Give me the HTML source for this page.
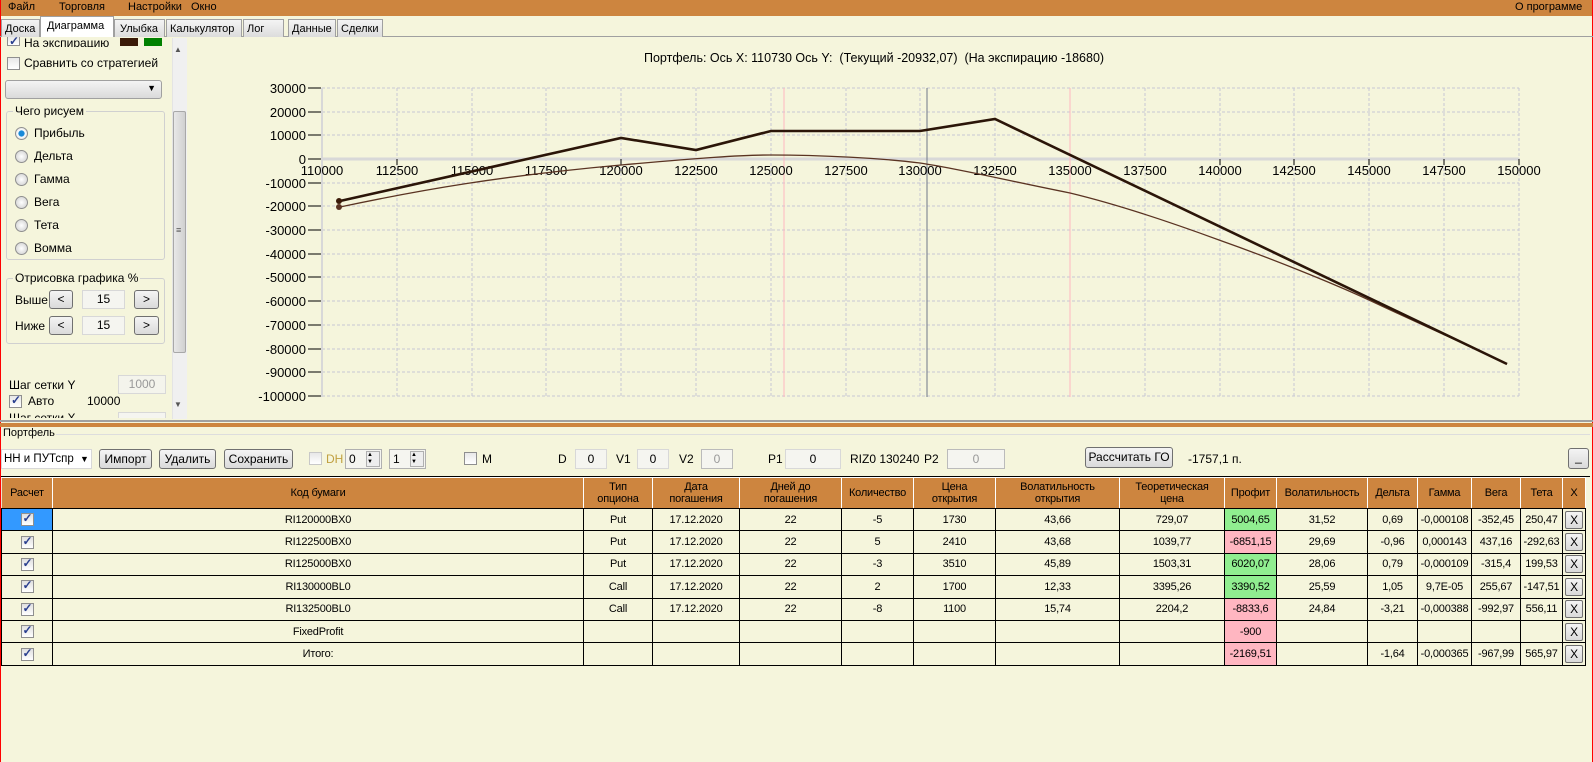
<!DOCTYPE html>
<html><head><meta charset="utf-8"><style>
*{box-sizing:border-box;margin:0;padding:0}
body{width:1593px;height:762px;position:relative;overflow:hidden;background:#f5f5dc;font-family:"Liberation Sans",sans-serif;font-size:12px;color:#000}
.a{position:absolute;white-space:nowrap}
.menu{left:0;top:0;width:1593px;height:16px;background:#cd853f}
.tab{position:absolute;top:19px;height:18px;background:linear-gradient(#f4f4f4,#dcdcdc);border:1px solid #a0a0a0;border-bottom:none;font-size:11px;padding:3px 3px;overflow:hidden;white-space:nowrap}
.btn{position:absolute;background:linear-gradient(#f4f4f4,#dadada);border:1px solid #707070;border-radius:3px;font-size:12px;text-align:center}
.inp{position:absolute;background:#f5f5f0;border:1px solid #d8d8d8;text-align:center;font-size:12px}
.cb{position:absolute;width:13px;height:13px;border:1px solid #8f8f8f;background:linear-gradient(#e8e8e8,#fff)}
.cb.on::after{content:"✓";position:absolute;left:1px;top:-3px;font-size:12px;color:#2a3f8f;font-weight:bold}
.rd{position:absolute;width:13px;height:13px;border-radius:50%;border:1px solid #8f8f8f;background:radial-gradient(#fff,#ccc)}
.rd.on{background:radial-gradient(#1a8ad8 35%,#fff 45%,#ccc)}
.grp{position:absolute;border:1px solid #d0d0d0;border-radius:3px}
.grp span{position:absolute;top:-8px;left:6px;background:#f5f5dc;padding:0 2px}
table{position:absolute;left:1px;top:477px;border-collapse:collapse;table-layout:fixed;font-size:11px;letter-spacing:-0.2px}
td,th{border:1px solid #000;text-align:center;overflow:hidden;white-space:nowrap;height:22.4px;padding:0}
th{background:#cd853f;font-weight:normal;height:31px;line-height:12px;border-color:#fff #fff #000 #fff;border-left:1px solid #f0e0d0}
.g{background:#90ee90}.p{background:#ffb6c1}
.x{display:inline-block;width:18px;height:18px;border:1px solid #707070;border-radius:2px;background:linear-gradient(#f4f4f4,#dadada);line-height:16px;font-size:12px}
.tc{display:inline-block;width:13px;height:13px;border:1px solid #8f8f8f;background:linear-gradient(#e0e0e0,#fff);position:relative;vertical-align:middle}
.tc::after{content:"✓";position:absolute;left:1px;top:-3px;font-size:12px;color:#2a3f8f;font-weight:bold}
</style></head><body>
<div class="a menu"></div>
<div class="a" style="left:0;top:0;width:1px;height:762px;background:#f00"></div>
<div class="a" style="left:1592px;top:0;width:1px;height:762px;background:#f00"></div>
<div class="a" style="left:8px;top:1px;font-size:11px">Файл</div>
<div class="a" style="left:59px;top:1px;font-size:11px">Торговля</div>
<div class="a" style="left:128px;top:1px;font-size:11px">Настройки</div>
<div class="a" style="left:191px;top:1px;font-size:11px">Окно</div>
<div class="a" style="left:1515px;top:1px;font-size:11px">О программе</div>
<div class="a" style="left:0;top:36px;width:1593px;height:1px;background:#a0a0a0"></div>
<div class="tab" style="left:1px;width:39px">Доска</div>
<div class="tab" style="left:40px;top:16px;height:21px;width:74px;background:#fff;padding-top:3px;padding-left:6px">Диаграмма</div>
<div class="tab" style="left:114px;width:51px;padding-left:5px">Улыбка</div>
<div class="tab" style="left:166px;width:76px">Калькулятор</div>
<div class="tab" style="left:243px;width:41px">Лог</div>
<div class="tab" style="left:288px;width:48px">Данные</div>
<div class="tab" style="left:337px;width:46px">Сделки</div>

<!-- left panel -->
<div class="cb on" style="left:7px;top:37px;height:9px;border-top:none"></div>
<div class="a" style="left:24px;top:36px;font-size:12px;height:11px;overflow:hidden">На экспирацию</div>
<div class="a" style="left:120px;top:38px;width:18px;height:8px;background:#3a1a08"></div>
<div class="a" style="left:144px;top:38px;width:18px;height:8px;background:#008000"></div>
<div class="cb" style="left:7px;top:57px"></div>
<div class="a" style="left:24px;top:56px">Сравнить со стратегией</div>
<div class="btn" style="left:5px;top:80px;width:157px;height:19px;border-color:#a0a0a0"><span style="position:absolute;right:5px;top:2px;font-size:9px">▼</span></div>
<div class="grp" style="left:6px;top:111px;width:159px;height:149px"><span>Чего рисуем</span></div>
<div class="rd on" style="left:15px;top:127px"></div><div class="a" style="left:34px;top:126px">Прибыль</div>
<div class="rd" style="left:15px;top:150px"></div><div class="a" style="left:34px;top:149px">Дельта</div>
<div class="rd" style="left:15px;top:173px"></div><div class="a" style="left:34px;top:172px">Гамма</div>
<div class="rd" style="left:15px;top:196px"></div><div class="a" style="left:34px;top:195px">Вега</div>
<div class="rd" style="left:15px;top:219px"></div><div class="a" style="left:34px;top:218px">Тета</div>
<div class="rd" style="left:15px;top:242px"></div><div class="a" style="left:34px;top:241px">Вомма</div>
<div class="grp" style="left:6px;top:278px;width:159px;height:66px"><span>Отрисовка графика %</span></div>
<div class="a" style="left:15px;top:293px">Выше</div>
<div class="btn" style="left:49px;top:290px;width:24px;height:19px;line-height:17px">&lt;</div>
<div class="inp" style="left:82px;top:290px;width:43px;height:19px;line-height:17px">15</div>
<div class="btn" style="left:134px;top:290px;width:25px;height:19px;line-height:17px">&gt;</div>
<div class="a" style="left:15px;top:319px">Ниже</div>
<div class="btn" style="left:49px;top:316px;width:24px;height:19px;line-height:17px">&lt;</div>
<div class="inp" style="left:82px;top:316px;width:43px;height:19px;line-height:17px">15</div>
<div class="btn" style="left:134px;top:316px;width:25px;height:19px;line-height:17px">&gt;</div>
<div class="a" style="left:9px;top:378px">Шаг сетки Y</div>
<div class="inp" style="left:118px;top:375px;width:48px;height:19px;line-height:17px;color:#999;background:#f4f4ec">1000</div>
<div class="cb on" style="left:9px;top:395px"></div>
<div class="a" style="left:28px;top:394px">Авто</div>
<div class="a" style="left:87px;top:394px">10000</div>
<div class="a" style="left:9px;top:411px;height:7px;overflow:hidden">Шаг сетки X</div>
<div class="inp" style="left:118px;top:412px;width:48px;height:6px;border-bottom:none"></div>
<div class="a" style="left:172px;top:38px;width:15px;height:381px;background:#f0f0f0;border-left:1px solid #e4e4e4"></div>
<div class="a" style="left:174px;top:45px;font-size:8px;color:#555">▲</div>
<div class="a" style="left:174px;top:400px;font-size:8px;color:#555">▼</div>
<div class="a" style="left:173px;top:111px;width:13px;height:242px;background:linear-gradient(90deg,#e8e8e8,#d0d0d0);border:1px solid #a8a8a8;border-radius:2px"></div>
<div class="a" style="left:176px;top:225px;font-size:9px;color:#555">≡</div>

<!-- chart -->
<div class="a" style="left:644px;top:51px;font-size:12.5px">Портфель: Ось X: 110730 Ось Y:&nbsp; (Текущий -20932,07)&nbsp; (На экспирацию -18680)</div>
<svg class="a" style="left:0;top:0" width="1593" height="420" xmlns="http://www.w3.org/2000/svg" font-family="Liberation Sans, sans-serif" font-size="12">
<g stroke="#c8c8d4" stroke-dasharray="3,2" stroke-width="1">
<line x1="397" y1="88" x2="397" y2="397"/><line x1="472" y1="88" x2="472" y2="397"/><line x1="546" y1="88" x2="546" y2="397"/><line x1="621" y1="88" x2="621" y2="397"/><line x1="696" y1="88" x2="696" y2="397"/><line x1="771" y1="88" x2="771" y2="397"/><line x1="846" y1="88" x2="846" y2="397"/><line x1="920" y1="88" x2="920" y2="397"/><line x1="995" y1="88" x2="995" y2="397"/><line x1="1070" y1="88" x2="1070" y2="397"/><line x1="1145" y1="88" x2="1145" y2="397"/><line x1="1220" y1="88" x2="1220" y2="397"/><line x1="1294" y1="88" x2="1294" y2="397"/><line x1="1369" y1="88" x2="1369" y2="397"/><line x1="1444" y1="88" x2="1444" y2="397"/><line x1="1519" y1="88" x2="1519" y2="397"/>
<line x1="322" y1="88" x2="1519" y2="88"/><line x1="322" y1="112" x2="1519" y2="112"/><line x1="322" y1="135" x2="1519" y2="135"/><line x1="322" y1="183" x2="1519" y2="183"/><line x1="322" y1="206" x2="1519" y2="206"/><line x1="322" y1="230" x2="1519" y2="230"/><line x1="322" y1="254" x2="1519" y2="254"/><line x1="322" y1="277" x2="1519" y2="277"/><line x1="322" y1="301" x2="1519" y2="301"/><line x1="322" y1="325" x2="1519" y2="325"/><line x1="322" y1="349" x2="1519" y2="349"/><line x1="322" y1="372" x2="1519" y2="372"/><line x1="322" y1="396" x2="1519" y2="396"/>
</g>
<line x1="322" y1="159" x2="1519" y2="159" stroke="#d8d8d8" stroke-width="3"/>
<line x1="322" y1="88" x2="322" y2="397" stroke="#d8d8d8" stroke-width="2"/>
<line x1="784" y1="88" x2="784" y2="397" stroke="#ffb6c1"/>
<line x1="1070" y1="88" x2="1070" y2="397" stroke="#ffb6c1"/>
<line x1="927" y1="88" x2="927" y2="397" stroke="#707888"/>
<g stroke="#000"><line x1="308" y1="88" x2="321" y2="88"/><line x1="308" y1="112" x2="321" y2="112"/><line x1="308" y1="135" x2="321" y2="135"/><line x1="308" y1="159" x2="321" y2="159"/><line x1="308" y1="183" x2="321" y2="183"/><line x1="308" y1="206" x2="321" y2="206"/><line x1="308" y1="230" x2="321" y2="230"/><line x1="308" y1="254" x2="321" y2="254"/><line x1="308" y1="277" x2="321" y2="277"/><line x1="308" y1="301" x2="321" y2="301"/><line x1="308" y1="325" x2="321" y2="325"/><line x1="308" y1="349" x2="321" y2="349"/><line x1="308" y1="372" x2="321" y2="372"/><line x1="308" y1="396" x2="321" y2="396"/></g>
<g text-anchor="end" font-size="13"><text x="306" y="93">30000</text><text x="306" y="117">20000</text><text x="306" y="140">10000</text><text x="306" y="164">0</text><text x="306" y="188">-10000</text><text x="306" y="211">-20000</text><text x="306" y="235">-30000</text><text x="306" y="259">-40000</text><text x="306" y="282">-50000</text><text x="306" y="306">-60000</text><text x="306" y="330">-70000</text><text x="306" y="354">-80000</text><text x="306" y="377">-90000</text><text x="306" y="401">-100000</text></g>
<g stroke="#000"><line x1="397" y1="159" x2="397" y2="165"/><line x1="621" y1="159" x2="621" y2="165"/><line x1="1220" y1="159" x2="1220" y2="165"/><line x1="1294" y1="159" x2="1294" y2="165"/><line x1="1369" y1="159" x2="1369" y2="165"/><line x1="1444" y1="159" x2="1444" y2="165"/><line x1="1519" y1="159" x2="1519" y2="165"/></g>
<g text-anchor="middle" font-size="13"><text x="322" y="175">110000</text><text x="397" y="175">112500</text><text x="472" y="175">115000</text><text x="546" y="175">117500</text><text x="621" y="175">120000</text><text x="696" y="175">122500</text><text x="771" y="175">125000</text><text x="846" y="175">127500</text><text x="920" y="175">130000</text><text x="995" y="175">132500</text><text x="1070" y="175">135000</text><text x="1145" y="175">137500</text><text x="1220" y="175">140000</text><text x="1294" y="175">142500</text><text x="1369" y="175">145000</text><text x="1444" y="175">147500</text><text x="1519" y="175">150000</text></g>
<path d="M340,207 C420,190 500,176 621,165 C700,158 740,155 771,155 C820,155 880,158 920,163 C960,169 1000,179 1070,193 C1120,205 1170,222 1219,240 C1270,258 1330,282 1369,300 C1420,324 1470,346 1507,364" fill="none" stroke="#5a3322" stroke-width="1.3"/>
<polyline points="340,201 621,138 696,150 771,131 920,131 995,119 1507,364" fill="none" stroke="#2b1508" stroke-width="2.6"/>
<circle cx="339" cy="201" r="3" fill="#3a1a08"/><circle cx="339" cy="207" r="3" fill="#5a3322"/>
</svg>

<!-- splitter -->
<div class="a" style="left:0;top:420px;width:1593px;height:2px;background:#a0a0a0"></div>
<div class="a" style="left:0;top:423px;width:1593px;height:4px;background:#cd853f"></div>
<div class="a" style="left:3px;top:427px;font-size:11px">Портфель</div>
<div class="a" style="left:56px;top:434px;width:1534px;height:1px;background:#ddd"></div>

<!-- toolbar -->
<div class="inp" style="left:1px;top:449px;width:91px;height:20px;background:#fff;text-align:left;padding-left:2px;line-height:18px;font-size:11.5px">НН и ПУТспр <span style="font-size:9px;margin-left:3px">▼</span></div>
<div class="btn" style="left:99px;top:449px;width:53px;height:20px;line-height:18px">Импорт</div>
<div class="btn" style="left:159px;top:449px;width:57px;height:20px;line-height:18px">Удалить</div>
<div class="btn" style="left:224px;top:449px;width:69px;height:20px;line-height:18px">Сохранить</div>
<div class="cb" style="left:309px;top:452px;border-color:#c8c8c8"></div>
<div class="a" style="left:326px;top:452px;color:#c0a040">DH</div>
<div class="inp" style="left:345px;top:449px;width:37px;height:20px;text-align:left;padding-left:3px;line-height:18px;border-color:#b0b0b0">0<span style="position:absolute;right:1px;top:1px;width:14px;height:16px;border:1px solid #b0b0b0;font-size:6px;line-height:7px;background:#eee">▲<br>▼</span></div>
<div class="inp" style="left:389px;top:449px;width:37px;height:20px;text-align:left;padding-left:3px;line-height:18px;border-color:#b0b0b0">1<span style="position:absolute;right:1px;top:1px;width:14px;height:16px;border:1px solid #b0b0b0;font-size:6px;line-height:7px;background:#eee">▲<br>▼</span></div>
<div class="cb" style="left:464px;top:452px"></div>
<div class="a" style="left:482px;top:452px">M</div>
<div class="a" style="left:558px;top:452px">D</div>
<div class="inp" style="left:575px;top:449px;width:32px;height:20px;line-height:18px">0</div>
<div class="a" style="left:616px;top:452px">V1</div>
<div class="inp" style="left:637px;top:449px;width:32px;height:20px;line-height:18px">0</div>
<div class="a" style="left:679px;top:452px">V2</div>
<div class="inp" style="left:701px;top:449px;width:32px;height:20px;line-height:18px;color:#999;border-color:#bbb">0</div>
<div class="a" style="left:768px;top:452px">P1</div>
<div class="inp" style="left:785px;top:449px;width:56px;height:20px;line-height:18px">0</div>
<div class="a" style="left:850px;top:452px">RIZ0 130240</div>
<div class="a" style="left:924px;top:452px">P2</div>
<div class="inp" style="left:947px;top:449px;width:58px;height:20px;line-height:18px;color:#999;border-color:#bbb">0</div>
<div class="btn" style="left:1085px;top:447px;width:88px;height:21px;line-height:19px">Рассчитать ГО</div>
<div class="a" style="left:1188px;top:452px">-1757,1 п.</div>
<div class="btn" style="left:1568px;top:448px;width:21px;height:21px;line-height:17px">_</div>
<div class="a" style="left:1px;top:476px;width:1589px;height:1px;background:#000"></div>

<table>
<colgroup><col style="width:51px"><col style="width:531px"><col style="width:69px"><col style="width:87px"><col style="width:102px"><col style="width:72px"><col style="width:82px"><col style="width:124px"><col style="width:105px"><col style="width:52px"><col style="width:91px"><col style="width:50px"><col style="width:54px"><col style="width:49px"><col style="width:42px"><col style="width:23px"></colgroup>
<tr><th>Расчет</th><th>Код бумаги</th><th>Тип<br>опциона</th><th>Дата<br>погашения</th><th>Дней до<br>погашения</th><th>Количество</th><th>Цена<br>открытия</th><th>Волатильность<br>открытия</th><th>Теоретическая<br>цена</th><th>Профит</th><th>Волатильность</th><th>Дельта</th><th>Гамма</th><th>Вега</th><th>Тета</th><th>X</th></tr>
<tr><td style="background:#3399ff"><span class="tc"></span></td><td>RI120000BX0</td><td>Put</td><td>17.12.2020</td><td>22</td><td>-5</td><td>1730</td><td>43,66</td><td>729,07</td><td class="g">5004,65</td><td>31,52</td><td>0,69</td><td>-0,000108</td><td>-352,45</td><td>250,47</td><td><span class="x">X</span></td></tr>
<tr><td><span class="tc"></span></td><td>RI122500BX0</td><td>Put</td><td>17.12.2020</td><td>22</td><td>5</td><td>2410</td><td>43,68</td><td>1039,77</td><td class="p">-6851,15</td><td>29,69</td><td>-0,96</td><td>0,000143</td><td>437,16</td><td>-292,63</td><td><span class="x">X</span></td></tr>
<tr><td><span class="tc"></span></td><td>RI125000BX0</td><td>Put</td><td>17.12.2020</td><td>22</td><td>-3</td><td>3510</td><td>45,89</td><td>1503,31</td><td class="g">6020,07</td><td>28,06</td><td>0,79</td><td>-0,000109</td><td>-315,4</td><td>199,53</td><td><span class="x">X</span></td></tr>
<tr><td><span class="tc"></span></td><td>RI130000BL0</td><td>Call</td><td>17.12.2020</td><td>22</td><td>2</td><td>1700</td><td>12,33</td><td>3395,26</td><td class="g">3390,52</td><td>25,59</td><td>1,05</td><td>9,7E-05</td><td>255,67</td><td>-147,51</td><td><span class="x">X</span></td></tr>
<tr><td><span class="tc"></span></td><td>RI132500BL0</td><td>Call</td><td>17.12.2020</td><td>22</td><td>-8</td><td>1100</td><td>15,74</td><td>2204,2</td><td class="p">-8833,6</td><td>24,84</td><td>-3,21</td><td>-0,000388</td><td>-992,97</td><td>556,11</td><td><span class="x">X</span></td></tr>
<tr><td><span class="tc"></span></td><td>FixedProfit</td><td></td><td></td><td></td><td></td><td></td><td></td><td></td><td class="p">-900</td><td></td><td></td><td></td><td></td><td></td><td><span class="x">X</span></td></tr>
<tr><td><span class="tc"></span></td><td>Итого:</td><td></td><td></td><td></td><td></td><td></td><td></td><td></td><td class="p">-2169,51</td><td></td><td>-1,64</td><td>-0,000365</td><td>-967,99</td><td>565,97</td><td><span class="x">X</span></td></tr>
</table>
</body></html>
